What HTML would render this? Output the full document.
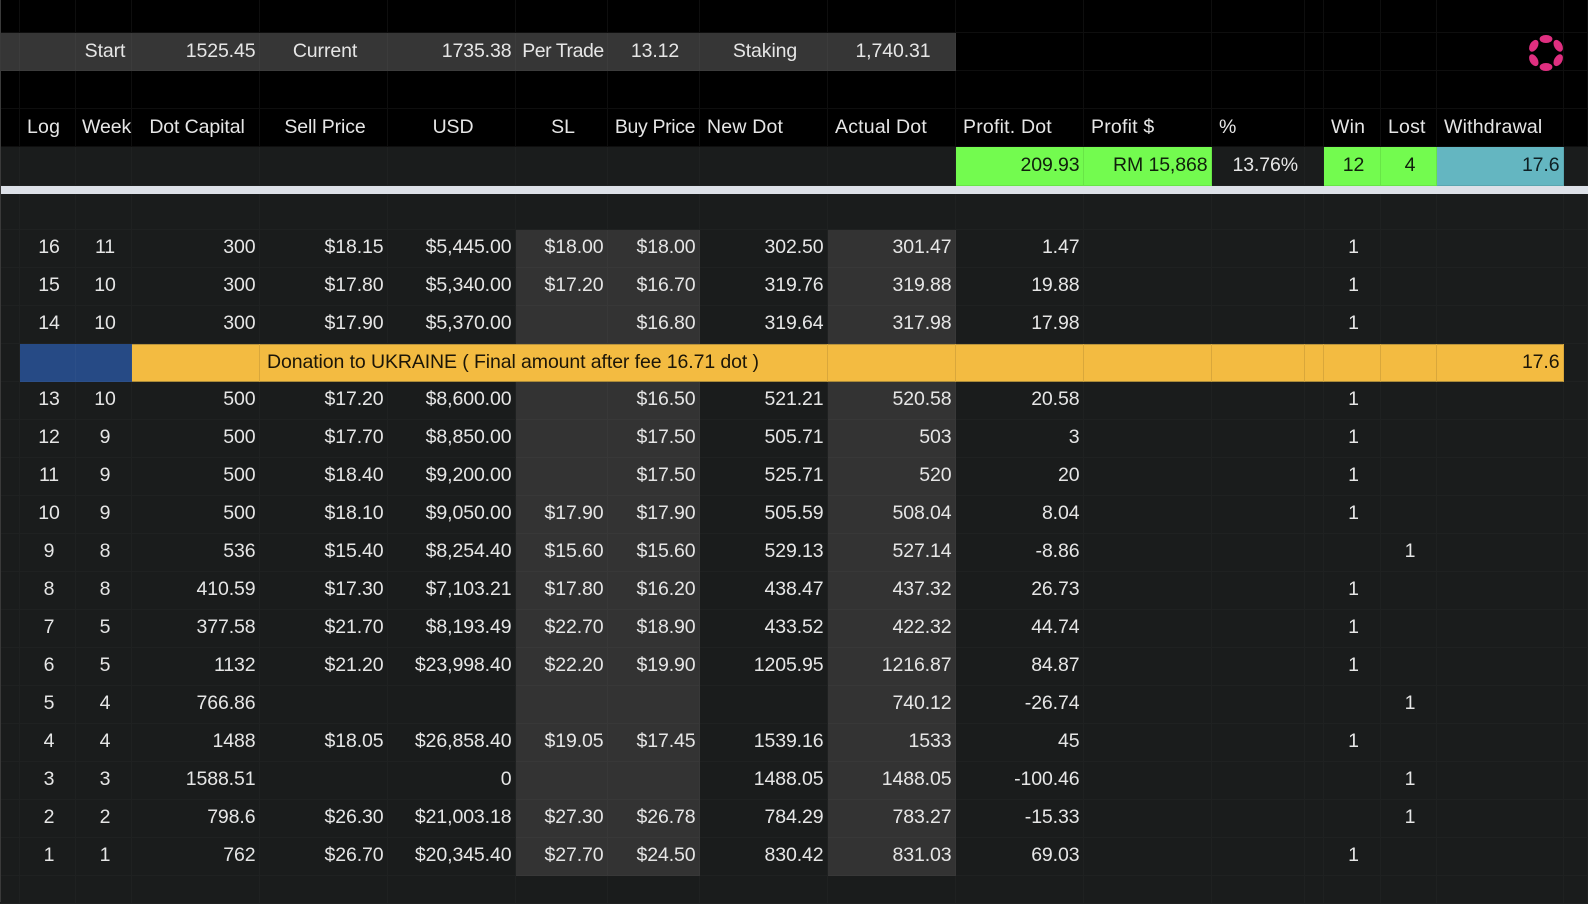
<!DOCTYPE html>
<html><head><meta charset="utf-8"><style>
html,body{margin:0;padding:0;background:#000;width:1588px;height:902px;overflow:hidden}
table{position:absolute;left:0;top:0;border-collapse:separate;border-spacing:0;table-layout:fixed;width:1588px;font:19.5px "Liberation Sans",sans-serif;color:#e6e6e6}
td{padding:0 3.5px 3px 4px;border-right:1px solid #1f2121;border-bottom:1px solid #1f2121;box-sizing:border-box;white-space:nowrap;overflow:visible;background:#1a1c1c;text-align:right;line-height:20px;letter-spacing:-.1px}
td:nth-child(2),td:nth-child(3),td:nth-child(15),td:nth-child(16){text-align:center;padding-left:6px;padding-right:3px}
tr.k td{background:#000;border-color:#0e0e0e;text-align:center;padding:0 3px 2px 6px}
tr.k td.l{text-align:left;padding-left:7px;padding-right:0;letter-spacing:.2px}
tr.k td.t{letter-spacing:-.35px}
tr.k td.r{text-align:right}
tr.b td{background:#363636;border-color:#3c3c3c;text-align:center;padding:0 3px 2px 6px}
tr.b td.r{text-align:right;padding-right:3.5px}
tr.b td.t{letter-spacing:-.45px}
tr.b td.n{background:#000;border-color:#0e0e0e}
tr.w td{background:#dde1e8;border:0;padding:0;height:8px;font-size:0;line-height:0}
td.g{background:#333;border-color:#383838}
tr.s td{padding-bottom:2px}
td.gr{background:#73fb4f;color:#10200c;border-color:#68e547}
td.tl{background:#64b6c1;color:#0e2024;border-color:#5aa6b0}
td.pc{text-align:right;padding-right:6px}
tr.y td{background:#f3bb41;color:#1c1608;border-color:#d9a73b;border-bottom-color:#a98a3a;box-shadow:inset 0 1px #b8933c;padding-bottom:2px}
tr.y td.nv{background:#264a85;border-color:#2c4f88;border-bottom-color:#2c4f88;box-shadow:none}
tr.y td.e{background:#1a1c1c;border-color:#1f2121;box-shadow:none}
tr.y td.tx{text-align:left;padding-left:7px}
svg{position:absolute;left:1520px;top:27px}
.edge{position:absolute;left:0;top:0;width:1px;height:902px;background:#3a3a3a}
</style></head><body>
<table>
<colgroup><col style="width:20px"><col style="width:56px"><col style="width:56px"><col style="width:128px"><col style="width:128px"><col style="width:128px"><col style="width:92px"><col style="width:92px"><col style="width:128px"><col style="width:128px"><col style="width:128px"><col style="width:128px"><col style="width:93px"><col style="width:19px"><col style="width:57px"><col style="width:56px"><col style="width:127px"><col style="width:24px"></colgroup>
<tr class="k" style="height:33px"><td></td><td></td><td></td><td></td><td></td><td></td><td></td><td></td><td></td><td></td><td></td><td></td><td></td><td></td><td></td><td></td><td></td><td></td></tr>
<tr class="b" style="height:38px"><td></td><td></td><td>Start</td><td class="r">1525.45</td><td>Current</td><td class="r">1735.38</td><td class="t">Per Trade</td><td>13.12</td><td>Staking</td><td>1,740.31</td><td class="n"></td><td class="n"></td><td class="n"></td><td class="n"></td><td class="n"></td><td class="n"></td><td class="n"></td><td class="n"></td></tr>
<tr class="k" style="height:38px"><td></td><td></td><td></td><td></td><td></td><td></td><td></td><td></td><td></td><td></td><td></td><td></td><td></td><td></td><td></td><td></td><td></td><td></td></tr>
<tr class="k" style="height:38px"><td></td><td class="l">Log</td><td>Week</td><td>Dot Capital</td><td>Sell Price</td><td>USD</td><td>SL</td><td class="t">Buy Price</td><td class="l">New Dot</td><td class="l">Actual Dot</td><td class="l">Profit. Dot</td><td class="l">Profit $</td><td class="l">%</td><td></td><td class="l">Win</td><td class="l">Lost</td><td class="l">Withdrawal</td><td></td></tr>
<tr class="s" style="height:39px"><td></td><td></td><td></td><td></td><td></td><td></td><td></td><td></td><td></td><td></td><td class="gr">209.93</td><td class="gr">RM 15,868</td><td class="pc">13.76%</td><td></td><td class="gr">12</td><td class="gr">4</td><td class="tl">17.6</td><td></td></tr>
<tr class="w"><td colspan="18"></td></tr>
<tr style="height:36px"><td></td><td></td><td></td><td></td><td></td><td></td><td></td><td></td><td></td><td></td><td></td><td></td><td></td><td></td><td></td><td></td><td></td><td></td></tr>
<tr style="height:38px"><td></td><td>16</td><td>11</td><td>300</td><td>$18.15</td><td>$5,445.00</td><td class="g">$18.00</td><td class="g">$18.00</td><td>302.50</td><td class="g">301.47</td><td>1.47</td><td></td><td></td><td></td><td>1</td><td></td><td></td><td></td></tr>
<tr style="height:38px"><td></td><td>15</td><td>10</td><td>300</td><td>$17.80</td><td>$5,340.00</td><td class="g">$17.20</td><td class="g">$16.70</td><td>319.76</td><td class="g">319.88</td><td>19.88</td><td></td><td></td><td></td><td>1</td><td></td><td></td><td></td></tr>
<tr style="height:38px"><td></td><td>14</td><td>10</td><td>300</td><td>$17.90</td><td>$5,370.00</td><td class="g"></td><td class="g">$16.80</td><td>319.64</td><td class="g">317.98</td><td>17.98</td><td></td><td></td><td></td><td>1</td><td></td><td></td><td></td></tr>
<tr class="y" style="height:38px"><td class="e"></td><td class="nv"></td><td class="nv"></td><td></td><td colspan="5" class="tx">Donation to UKRAINE ( Final amount after fee 16.71 dot )</td><td></td><td></td><td></td><td></td><td></td><td></td><td></td><td>17.6</td><td class="e"></td></tr>
<tr style="height:38px"><td></td><td>13</td><td>10</td><td>500</td><td>$17.20</td><td>$8,600.00</td><td class="g"></td><td class="g">$16.50</td><td>521.21</td><td class="g">520.58</td><td>20.58</td><td></td><td></td><td></td><td>1</td><td></td><td></td><td></td></tr>
<tr style="height:38px"><td></td><td>12</td><td>9</td><td>500</td><td>$17.70</td><td>$8,850.00</td><td class="g"></td><td class="g">$17.50</td><td>505.71</td><td class="g">503</td><td>3</td><td></td><td></td><td></td><td>1</td><td></td><td></td><td></td></tr>
<tr style="height:38px"><td></td><td>11</td><td>9</td><td>500</td><td>$18.40</td><td>$9,200.00</td><td class="g"></td><td class="g">$17.50</td><td>525.71</td><td class="g">520</td><td>20</td><td></td><td></td><td></td><td>1</td><td></td><td></td><td></td></tr>
<tr style="height:38px"><td></td><td>10</td><td>9</td><td>500</td><td>$18.10</td><td>$9,050.00</td><td class="g">$17.90</td><td class="g">$17.90</td><td>505.59</td><td class="g">508.04</td><td>8.04</td><td></td><td></td><td></td><td>1</td><td></td><td></td><td></td></tr>
<tr style="height:38px"><td></td><td>9</td><td>8</td><td>536</td><td>$15.40</td><td>$8,254.40</td><td class="g">$15.60</td><td class="g">$15.60</td><td>529.13</td><td class="g">527.14</td><td>-8.86</td><td></td><td></td><td></td><td></td><td>1</td><td></td><td></td></tr>
<tr style="height:38px"><td></td><td>8</td><td>8</td><td>410.59</td><td>$17.30</td><td>$7,103.21</td><td class="g">$17.80</td><td class="g">$16.20</td><td>438.47</td><td class="g">437.32</td><td>26.73</td><td></td><td></td><td></td><td>1</td><td></td><td></td><td></td></tr>
<tr style="height:38px"><td></td><td>7</td><td>5</td><td>377.58</td><td>$21.70</td><td>$8,193.49</td><td class="g">$22.70</td><td class="g">$18.90</td><td>433.52</td><td class="g">422.32</td><td>44.74</td><td></td><td></td><td></td><td>1</td><td></td><td></td><td></td></tr>
<tr style="height:38px"><td></td><td>6</td><td>5</td><td>1132</td><td>$21.20</td><td>$23,998.40</td><td class="g">$22.20</td><td class="g">$19.90</td><td>1205.95</td><td class="g">1216.87</td><td>84.87</td><td></td><td></td><td></td><td>1</td><td></td><td></td><td></td></tr>
<tr style="height:38px"><td></td><td>5</td><td>4</td><td>766.86</td><td></td><td></td><td class="g"></td><td class="g"></td><td></td><td class="g">740.12</td><td>-26.74</td><td></td><td></td><td></td><td></td><td>1</td><td></td><td></td></tr>
<tr style="height:38px"><td></td><td>4</td><td>4</td><td>1488</td><td>$18.05</td><td>$26,858.40</td><td class="g">$19.05</td><td class="g">$17.45</td><td>1539.16</td><td class="g">1533</td><td>45</td><td></td><td></td><td></td><td>1</td><td></td><td></td><td></td></tr>
<tr style="height:38px"><td></td><td>3</td><td>3</td><td>1588.51</td><td></td><td>0</td><td class="g"></td><td class="g"></td><td>1488.05</td><td class="g">1488.05</td><td>-100.46</td><td></td><td></td><td></td><td></td><td>1</td><td></td><td></td></tr>
<tr style="height:38px"><td></td><td>2</td><td>2</td><td>798.6</td><td>$26.30</td><td>$21,003.18</td><td class="g">$27.30</td><td class="g">$26.78</td><td>784.29</td><td class="g">783.27</td><td>-15.33</td><td></td><td></td><td></td><td></td><td>1</td><td></td><td></td></tr>
<tr style="height:38px"><td></td><td>1</td><td>1</td><td>762</td><td>$26.70</td><td>$20,345.40</td><td class="g">$27.70</td><td class="g">$24.50</td><td>830.42</td><td class="g">831.03</td><td>69.03</td><td></td><td></td><td></td><td>1</td><td></td><td></td><td></td></tr>
<tr style="height:28px"><td></td><td></td><td></td><td></td><td></td><td></td><td></td><td></td><td></td><td></td><td></td><td></td><td></td><td></td><td></td><td></td><td></td><td></td></tr>
</table>
<div class="edge"></div>
<svg width="52" height="52" viewBox="-26 -26 52 52"><g fill="#df2f80"><ellipse cx="0" cy="-14" rx="6.4" ry="4"/><ellipse cx="0" cy="14" rx="6.4" ry="4"/><ellipse cx="-12.2" cy="-7.2" rx="6.4" ry="4" transform="rotate(-60 -12.2 -7.2)"/><ellipse cx="12.2" cy="-7.2" rx="6.4" ry="4" transform="rotate(60 12.2 -7.2)"/><ellipse cx="-12.2" cy="7.2" rx="6.4" ry="4" transform="rotate(60 -12.2 7.2)"/><ellipse cx="12.2" cy="7.2" rx="6.4" ry="4" transform="rotate(-60 12.2 7.2)"/></g></svg>
</body></html>
